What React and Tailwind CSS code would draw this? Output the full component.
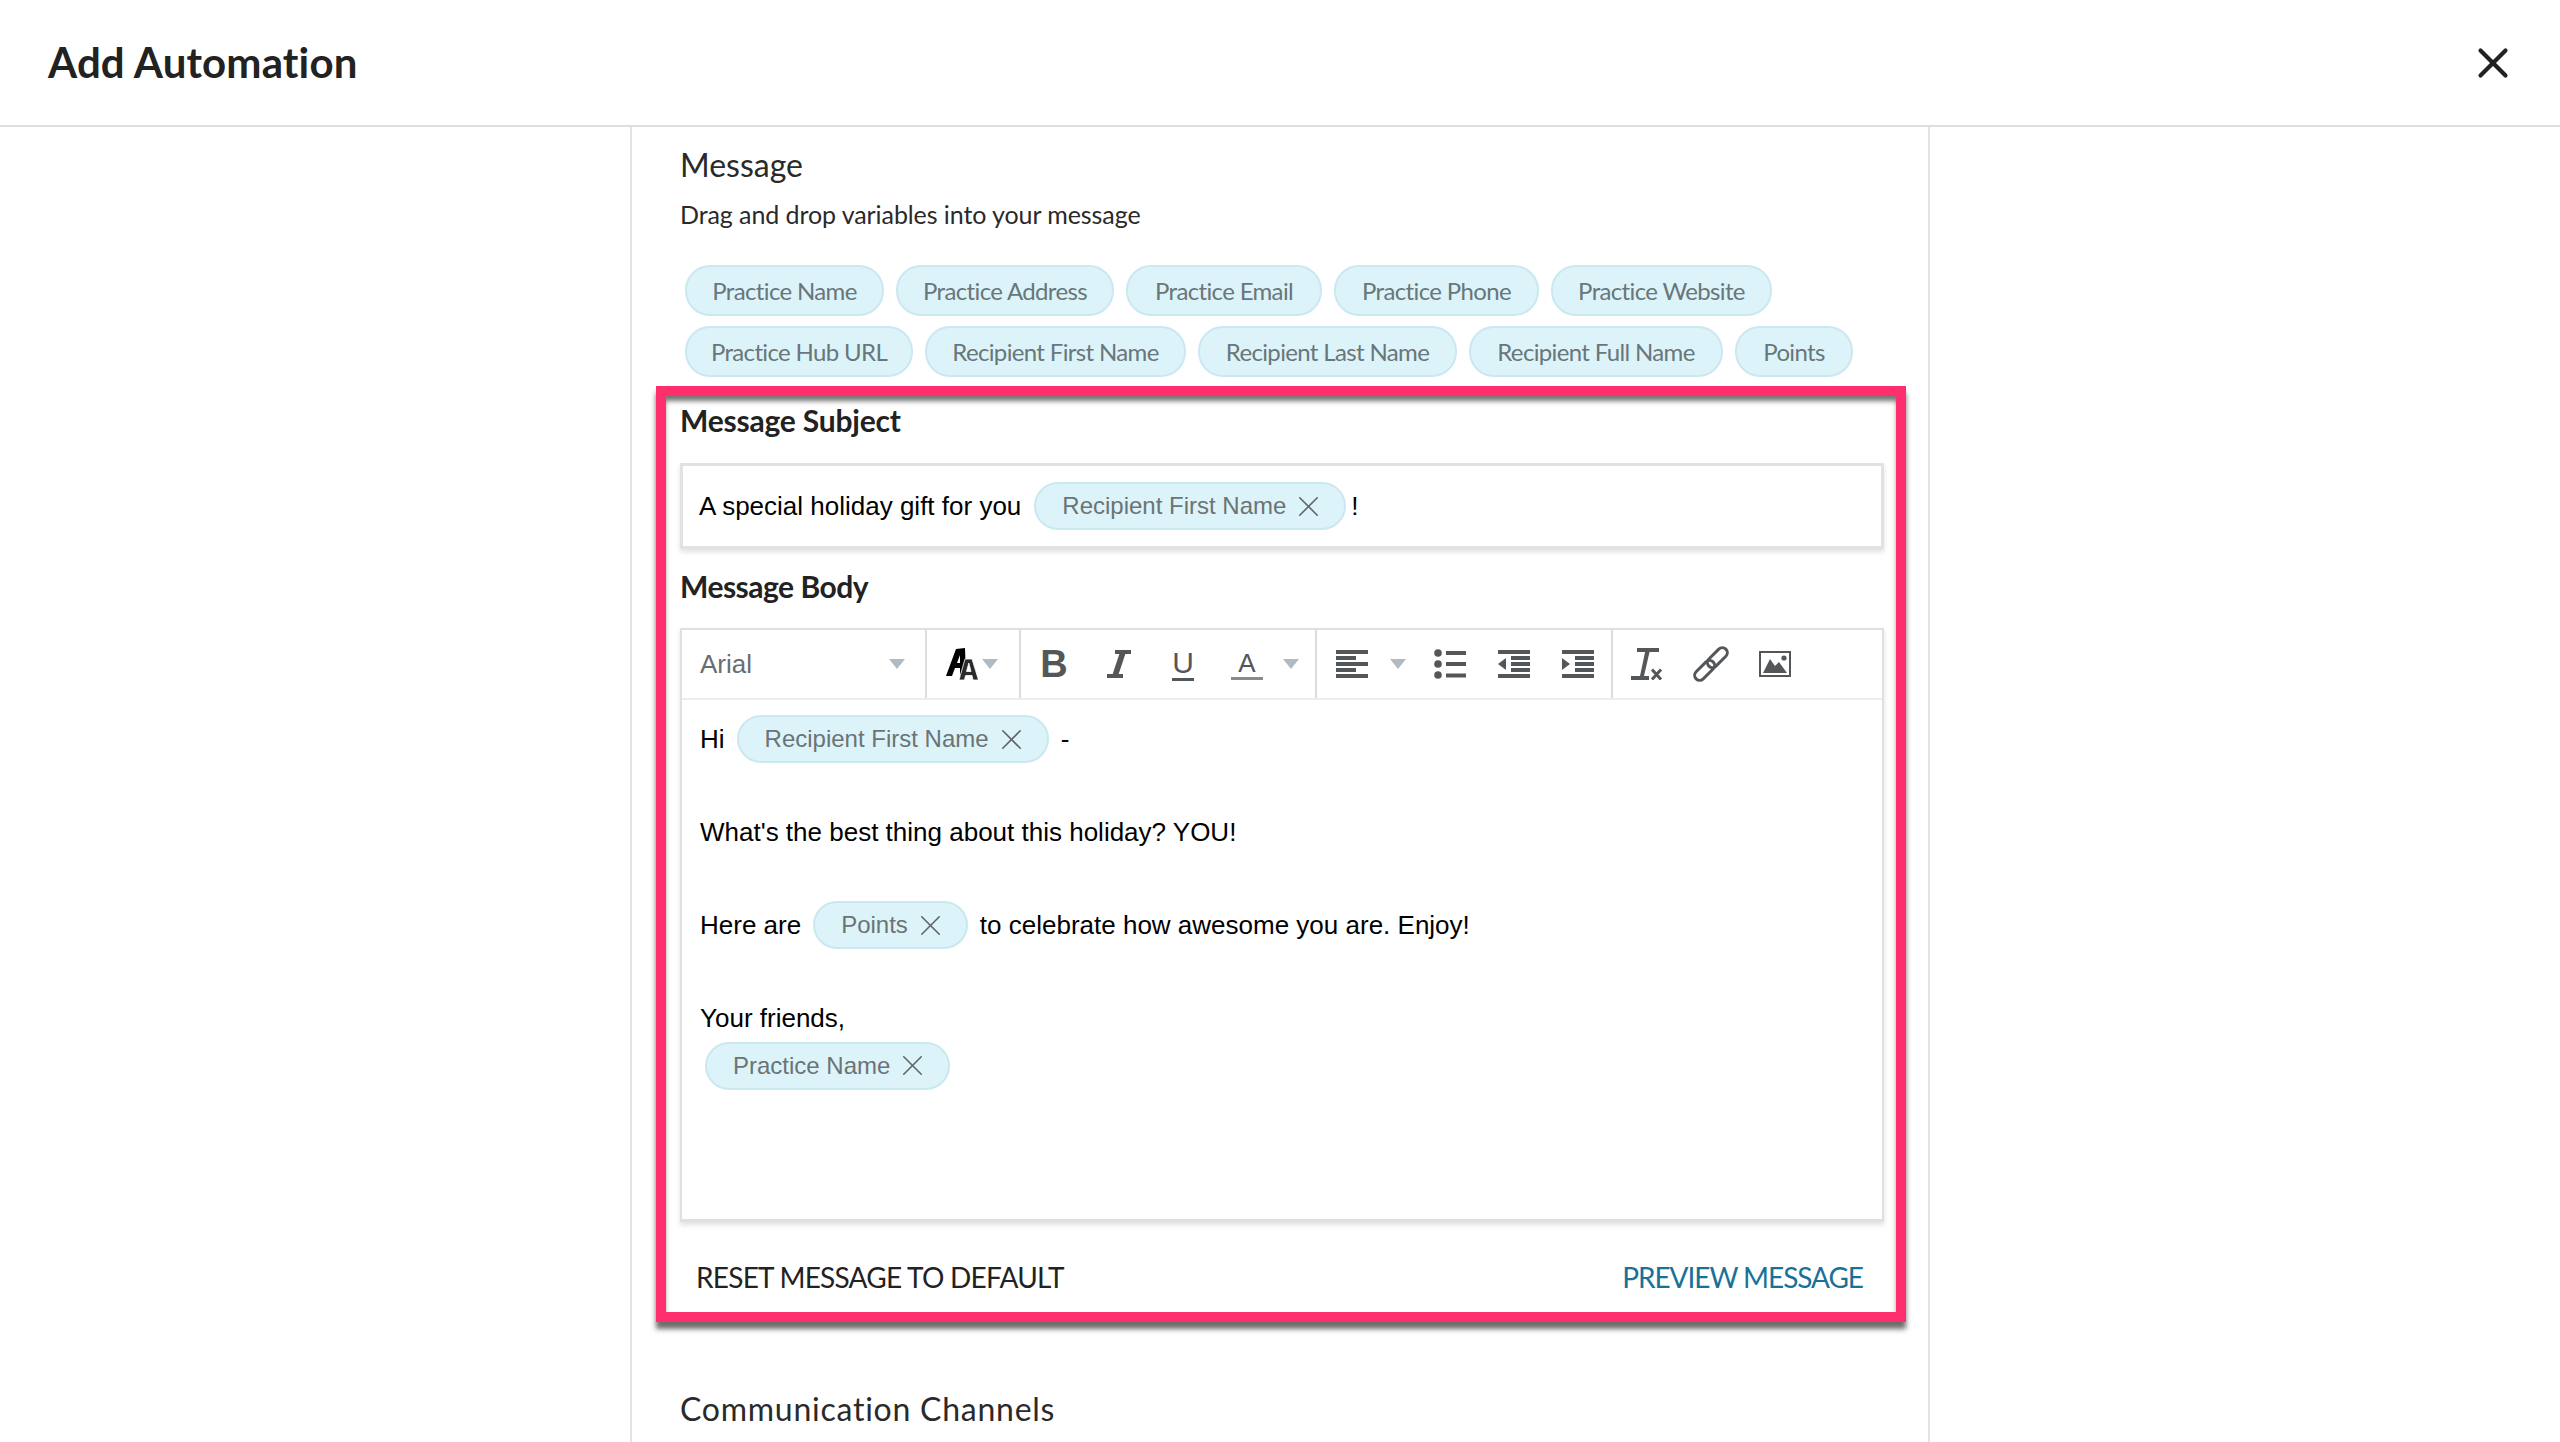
import { X } from "lucide-react";

const uiFont = "font-['Lato','Noto_Sans',sans-serif]";

const topChipsOne = [
  { label: "Practice Name", w: "w-[199px]" },
  { label: "Practice Address", w: "w-[218px]" },
  { label: "Practice Email", w: "w-[196px]" },
  { label: "Practice Phone", w: "w-[205px]" },
  { label: "Practice Website", w: "w-[221px]" },
];
const topChipsTwo = [
  { label: "Practice Hub URL", w: "w-[228px]" },
  { label: "Recipient First Name", w: "w-[261px]" },
  { label: "Recipient Last Name", w: "w-[259px]" },
  { label: "Recipient Full Name", w: "w-[254px]" },
  { label: "Points", w: "w-[118px]" },
];

const VarChip = ({ label, w }) => (
  <span className={`inline-flex h-[51px] items-center justify-center whitespace-nowrap rounded-[25px] border-2 border-[#cbe7ef] bg-[#dcf4f9] text-[24px] tracking-[-0.65px] text-[#69767a] ${w}`}>
    {label}
  </span>
);

const TokenChip = ({ label, className = "" }) => (
  <span className={`inline-flex h-[48px] items-center rounded-[24px] border-2 border-[#cbe7ef] bg-[#dcf4f9] pl-[26px] pr-[18px] text-[24px] text-[#6b7375] ${className}`}>
    {label}
    <X className="ml-[5px] h-[35px] w-[35px] text-[#5f6568]" strokeWidth={1.1} />
  </span>
);

const Caret = ({ className = "" }) => (
  <svg viewBox="0 0 16 10" className={`h-[10px] w-[16px] ${className}`}>
    <polygon points="0,0 16,0 8,10" fill="#b0bac3" />
  </svg>
);

const FontSizeIcon = () => (
  <svg viewBox="0 0 32 32" className="h-[32px] w-[32px]">
    <path fillRule="evenodd" fill="#000" d="M0 28L10 1 19 0 20 28 14 28 14 20 9 20 6 28ZM11 15L14 15 14 7Z" />
    <path fillRule="evenodd" fill="#2b2b2b" stroke="#fff" strokeWidth="0.8" d="M13 32L19 11 26 11 32.5 32 27 32 26 27.5 19.5 27.5 18.5 32ZM20.5 23.5L25 23.5 22.8 15Z" />
  </svg>
);

const Bars = ({ rows }) => (
  <svg viewBox="0 0 32 28" className="h-[28px] w-[32px]" fill="#54575a">
    {rows.map((w, i) => (
      <rect key={i} x="0" y={i * 6} width={w} height="4" />
    ))}
  </svg>
);

const BulletIcon = () => (
  <svg viewBox="0 0 32 30" className="h-[30px] w-[32px]" fill="#54575a">
    <circle cx="4" cy="4" r="3.8" />
    <circle cx="4" cy="15" r="3.8" />
    <circle cx="4" cy="26" r="3.8" />
    <rect x="12" y="2" width="20" height="4" />
    <rect x="12" y="13" width="20" height="4" />
    <rect x="12" y="24.5" width="20" height="4" />
  </svg>
);

const IndentIcon = ({ flip }) => (
  <svg viewBox="0 0 32 28" className="h-[28px] w-[32px]" fill="#54575a">
    <rect x="0" y="0" width="32" height="4" />
    <rect x="13" y="6" width="19" height="4" />
    <rect x="13" y="12" width="19" height="4" />
    <rect x="13" y="18" width="19" height="4" />
    <rect x="0" y="24" width="32" height="4" />
    {flip ? <polygon points="0,8 8,14 0,20" /> : <polygon points="8,8 0,14 8,20" />}
  </svg>
);

const ItalicIcon = () => (
  <svg viewBox="0 0 24 28" className="h-[28px] w-[24px]" fill="#54575a">
    <rect x="8" y="0" width="16" height="4" />
    <rect x="0" y="24" width="16" height="4" />
    <polygon points="13,2 19,2 11,26 5,26" />
  </svg>
);

const ClearIcon = () => (
  <svg viewBox="0 0 32 32" className="h-[32px] w-[32px]" fill="#54575a">
    <rect x="6" y="0" width="22" height="4" />
    <polygon points="14.5,2 19,2 13,28 9,28" />
    <rect x="0" y="28" width="18" height="4" />
    <path d="M21 21.5l9 10M30 21.5l-9 10" stroke="#54575a" strokeWidth="3" fill="none" />
  </svg>
);

const LinkIcon = () => (
  <svg viewBox="0 0 32 32" className="h-[32px] w-[32px] overflow-visible" fill="none" stroke="#54575a" strokeWidth="3">
    <g transform="rotate(-45 16 16)">
      <rect x="-5" y="11" width="24" height="10" rx="5" />
      <rect x="13" y="11" width="24" height="10" rx="5" />
    </g>
  </svg>
);

const ImageIcon = () => (
  <svg viewBox="0 0 32 26" className="h-[26px] w-[32px]">
    <rect x="1" y="1" width="30" height="24" fill="none" stroke="#54575a" strokeWidth="2" />
    <polygon points="4,22 11,8 16,15 20,11 28,22" fill="#54575a" />
    <circle cx="25" cy="7" r="2.6" fill="#54575a" />
  </svg>
);

const IconSlot = ({ w, children }) => (
  <div className={`flex items-center justify-center ${w}`}>{children}</div>
);

const Toolbar = () => (
  <div className="flex h-[70px] items-stretch border-b-2 border-[#ececec] font-['Liberation_Sans',sans-serif] text-[#54575a]">
    <div className="flex w-[245px] items-center justify-between border-r-2 border-[#dcdcdc] pl-[18px] pr-[20px] text-[26px] text-[#6a6d70]">
      Arial
      <Caret />
    </div>
    <div className="flex w-[94px] items-center border-r-2 border-[#dcdcdc] pl-[19px]">
      <FontSizeIcon />
      <Caret className="ml-[4px]" />
    </div>
    <div className="flex w-[296px] items-center border-r-2 border-[#dcdcdc] pl-[17px]">
      <IconSlot w="w-[32px]"><span className="text-[38px] font-bold leading-none">B</span></IconSlot>
      <IconSlot w="ml-[33px] w-[32px]"><ItalicIcon /></IconSlot>
      <IconSlot w="ml-[32px] w-[32px]"><span className="border-b-[3px] border-[#54575a] text-[30px] leading-[30px]">U</span></IconSlot>
      <div className="ml-[32px] flex w-[32px] flex-col items-center">
        <span className="text-[26px] leading-[28px]">A</span>
        <span className="h-[3px] w-[32px] bg-[#8a8a8a]" />
      </div>
      <Caret className="ml-[20px]" />
    </div>
    <div className="flex w-[296px] items-center border-r-2 border-[#dcdcdc] pl-[19px]">
      <Bars rows={[32, 20, 32, 20, 32]} />
      <Caret className="ml-[22px]" />
      <div className="ml-[28px]"><BulletIcon /></div>
      <div className="ml-[32px]"><IndentIcon /></div>
      <div className="ml-[32px]"><IndentIcon flip /></div>
    </div>
    <div className="flex items-center pl-[18px]">
      <ClearIcon />
      <div className="ml-[32px]"><LinkIcon /></div>
      <div className="ml-[32px]"><ImageIcon /></div>
    </div>
  </div>
);

const Line = ({ children, className = "" }) => (
  <div className={`flex h-[46.5px] items-center whitespace-pre ${className}`}>{children}</div>
);

export default function App() {
  return (
    <div className={`h-[1442px] overflow-hidden bg-white text-[#222] ${uiFont}`}>
      <header className="flex h-[127px] items-center justify-between border-b-2 border-[#dedede] pl-[48px] pr-[42px]">
        <h1 className="text-[42px] font-bold tracking-[0.15px] text-[#222]">Add Automation</h1>
        <X className="h-[50px] w-[50px] text-[#222]" strokeWidth={2} />
      </header>

      <main className="mx-auto h-[1315px] w-[1300px] border-x-2 border-[#e3e3e3] pl-[48px] pt-[18px]">
        <h2 className="h-[40px] text-[32px] leading-[40px] text-[#2a2a2a]">Message</h2>
        <p className="mt-[11px] h-[36px] text-[25px] leading-[36px] tracking-[-0.08px] text-[#2a2a2a]">Drag and drop variables into your message</p>

        <div className="ml-[5px] mt-[33px] flex gap-[12px]">
          {topChipsOne.map((c) => <VarChip key={c.label} {...c} />)}
        </div>
        <div className="ml-[5px] mt-[10px] flex gap-[12px]">
          {topChipsTwo.map((c) => <VarChip key={c.label} {...c} />)}
        </div>

        <section className="-ml-[24px] mt-[9px] h-[936px] w-[1250px] border-[10px] border-[#ff2e6c] pl-[14px] shadow-[0_7px_5px_rgba(60,60,60,0.75),inset_0_6px_5px_-1px_rgba(70,70,70,0.75)]">
          <div className="mt-[6px] h-[36px] text-[30px] font-bold leading-[36px] tracking-[-0.2px] text-[#222]">Message Subject</div>

          <div className="mt-[25px] flex h-[86px] w-[1204px] items-center border-[3px] border-[#e2e2e2] pl-[16px] font-['Liberation_Sans',sans-serif] text-[26px] text-black shadow-[0_3px_5px_rgba(0,0,0,0.12)]">
            A special holiday gift for you
            <TokenChip label="Recipient First Name" className="ml-[13px]" />
            <span className="ml-[5px]">!</span>
          </div>

          <div className="mt-[19px] h-[36px] text-[30px] font-bold leading-[36px] tracking-[-0.5px] text-[#222]">Message Body</div>

          <div className="mt-[24px] h-[594px] w-[1204px] border-2 border-b-[3px] border-[#e0e0e0] shadow-[0_3px_5px_rgba(0,0,0,0.12)]">
            <Toolbar />
            <div className="pl-[18px] pt-[16px] font-['Liberation_Sans',sans-serif] text-[26px] text-black">
              <Line>Hi<TokenChip label="Recipient First Name" className="ml-[12px] mr-[12px]" />-</Line>
              <Line />
              <Line>What's the best thing about this holiday? YOU!</Line>
              <Line />
              <Line>Here are<TokenChip label="Points" className="ml-[12px] mr-[12px]" />to celebrate how awesome you are. Enjoy!</Line>
              <Line />
              <Line>Your friends,</Line>
              <Line className="translate-y-[1px]"><TokenChip label="Practice Name" className="ml-[5px]" /></Line>
            </div>
          </div>

          <div className="mt-[35px] flex h-[40px] w-[1203px] items-center justify-between pl-[16px] pr-[20px] text-[28px]">
            <span className="tracking-[-0.75px] text-[#222]">RESET MESSAGE TO DEFAULT</span>
            <span className="tracking-[-1.05px] text-[#1a7197]">PREVIEW MESSAGE</span>
          </div>
        </section>

        <h2 className="mt-[65px] h-[44px] text-[32px] leading-[44px] tracking-[0.75px] text-[#2a2a2a]">Communication Channels</h2>
      </main>
    </div>
  );
}
